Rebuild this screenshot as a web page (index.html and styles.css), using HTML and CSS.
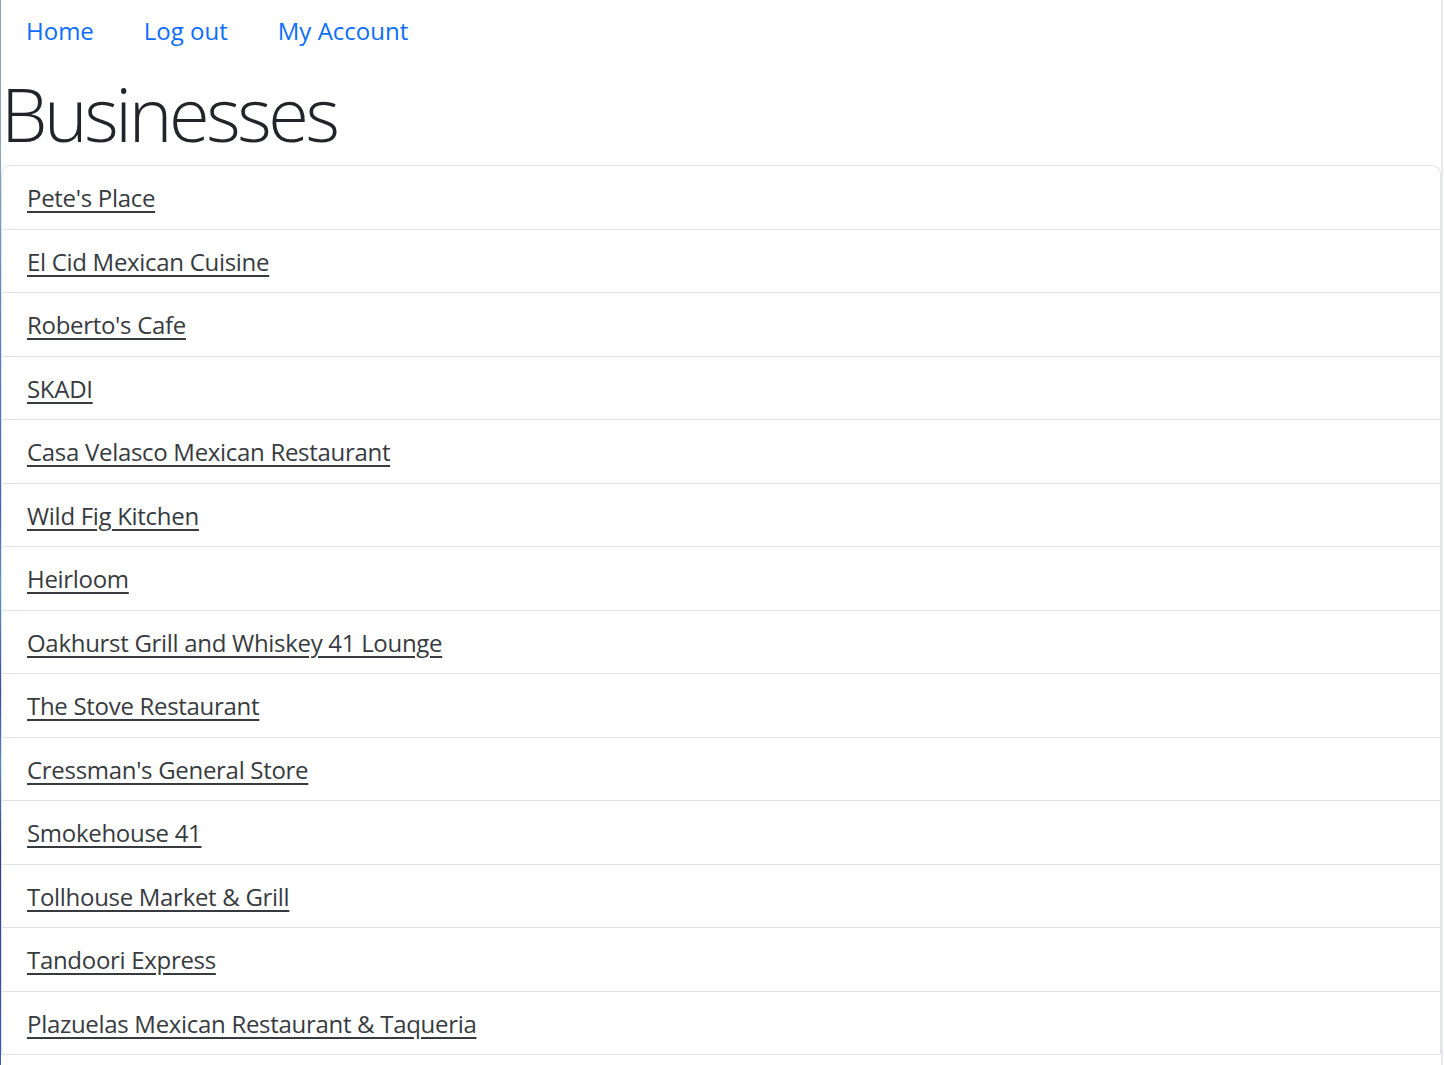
FILE: index.html
```html
<!DOCTYPE html>
<html lang="en">
<head>
<meta charset="utf-8">
<title>Businesses</title>
<link rel="stylesheet" href="styles.css">
</head>
<body>
<div class="page">
  <div class="edge"></div>
  <main class="main">
    <nav class="nav">
      <a class="nav-link" href="#">Home</a>
      <a class="nav-link" href="#">Log out</a>
      <a class="nav-link" href="#">My Account</a>
    </nav>
    <h1 class="title">Businesses</h1>
    <ul class="list">
      <li class="item"><a href="#">Pete's Place</a></li>
      <li class="item"><a href="#">El Cid Mexican Cuisine</a></li>
      <li class="item"><a href="#">Roberto's Cafe</a></li>
      <li class="item"><a href="#">SKADI</a></li>
      <li class="item"><a href="#">Casa Velasco Mexican Restaurant</a></li>
      <li class="item"><a href="#">Wild Fig Kitchen</a></li>
      <li class="item"><a href="#">Heirloom</a></li>
      <li class="item"><a href="#">Oakhurst Grill and Whiskey 41 Lounge</a></li>
      <li class="item"><a href="#">The Stove Restaurant</a></li>
      <li class="item"><a href="#">Cressman's General Store</a></li>
      <li class="item"><a href="#">Smokehouse 41</a></li>
      <li class="item"><a href="#">Tollhouse Market &amp; Grill</a></li>
      <li class="item"><a href="#">Tandoori Express</a></li>
      <li class="item"><a href="#">Plazuelas Mexican Restaurant &amp; Taqueria</a></li>
    </ul>
  </main>
  <div class="rail"></div>
</div>
</body>
</html>
```
FILE: styles.css
```css
html, body {
  margin: 0;
  padding: 0;
  height: 100%;
  overflow: hidden;
  background: #fff;
}
body {
  font-family: "Open Sans", "Noto Sans", "Liberation Sans", sans-serif;
  color: #212529;
}
.page {
  display: flex;
  height: 1065px;
}
.edge {
  width: 1px;
  flex: none;
  background: linear-gradient(to bottom, #90a4b8 0, #8fa6ba 14%, #6a9ac8 22%, #4d7cc8 35%, #4660c0 48%, #5a9ac4 55%, #3a4aa8 65%, #4f8cc8 72%, #323a88 80%, #3b5bbf 100%);
}
.main {
  flex: 1;
  min-width: 0;
}
.rail {
  width: 2px;
  flex: none;
  background: #e9e9e9;
  margin-right: 1px;
}
.nav {
  display: flex;
  height: 62px;
  align-items: center;
}
.nav-link {
  font-size: 24px;
  line-height: 36px;
  padding: 0 25px;
  color: #0d6efd;
  text-decoration: none;
}
.title {
  margin: 0;
  font-weight: 300;
  font-size: 74px;
  line-height: 103px;
  color: #212529;
  letter-spacing: -3.4px;
}
.list {
  list-style: none;
  margin: 0;
  padding: 0;
  border: 1px solid #dee2e6;
  border-radius: 9px 9px 0 0;
  overflow: hidden;
}
.item {
  padding: 14px 25px 12.5px;
  font-size: 24px;
  line-height: 36px;
  border-top: 1px solid #dee2e6;
  letter-spacing: -0.3px;
}
.item:first-child {
  border-top: none;
}
.item a {
  color: #373b40;
  text-decoration: underline;
  text-underline-offset: 4px;
}
```
